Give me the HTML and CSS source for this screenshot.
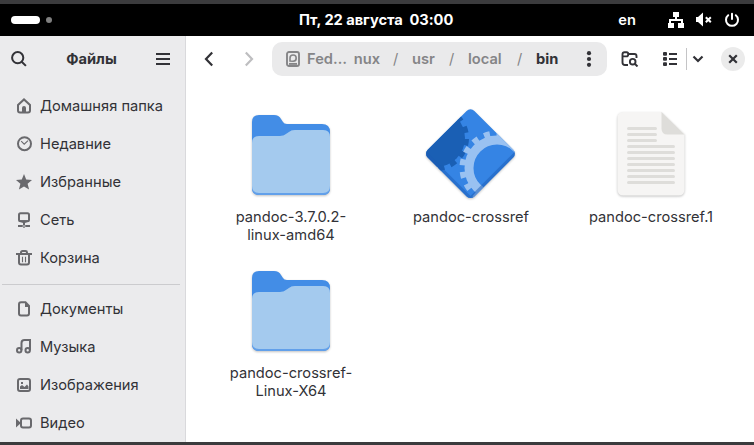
FILE: index.html
```html
<!DOCTYPE html>
<html lang="ru">
<head>
<meta charset="utf-8">
<title>Файлы</title>
<link rel="stylesheet" href="styles.css">
</head>
<body>
<svg width="0" height="0" class="defs">
  <symbol id="folder" viewBox="0 0 90 96">
    <path d="M6 13q0-7 7-7h15q5 0 7 4l2 3q1 2 4 2h35q8 0 8 8v56q0 7-7 7H13q-7 0-7-7z" fill="#438de6"/>
    <path d="M6 34q0-7 7-7h21q4 0 6-2l3-2q2-2 6-2h28q7 0 7 7v51q0 7-7 7H13q-7 0-7-7z" fill="#62a0ea"/>
    <path d="M6 34q0-7 7-7h21q4 0 6-2l3-2q2-2 6-2h28q7 0 7 7v49q0 7-7 7H13q-7 0-7-7z" fill="#a4caee"/>
  </symbol>
</svg>
<header class="topbar">
  <span class="pill"></span><span class="dot"></span>
  <span class="clock">Пт, 22 августа&nbsp; 03:00</span>
  <div class="status">
    <span class="lang">en</span>
    <svg class="net" width="16" height="16" viewBox="0 0 16 16" fill="#fff"><path d="M5 0h6v5H9v2h6v4h1v5h-6v-5h3V9H3v2h3v5H0v-5h1V7h6V5H5z"/></svg>
    <svg class="vol" width="16" height="16" viewBox="0 0 16 16"><path d="M0 5h2l5-4.500v14L2 10H0z" fill="#fff"/><path d="M9.800 5.200l5 5m0-5l-5 5" stroke="#fff" stroke-width="2"/></svg>
    <svg width="16" height="16" viewBox="0 0 16 16" fill="none" stroke="#fff" stroke-width="2" stroke-linecap="round"><path d="M4.200 3.200a6 6 0 1 0 7.600 0M8 1.700v5.200"/></svg>
  </div>
</header>
<div class="window">
  <aside class="sidebar">
    <div class="side-head">
      <svg width="16" height="16" viewBox="0 0 16 16" fill="none" stroke="#323237" stroke-width="2"><circle cx="6.7" cy="6.7" r="5.6"/><path d="M10.7 10.7l4.2 4.2"/></svg>
      <b>Файлы</b>
      <svg width="14" height="14" viewBox="0 0 14 14" fill="#323237"><path d="M0 1h14v2H0zM0 6h14v2H0zM0 11h14v2H0z"/></svg>
    </div>
    <nav>
      <div class="row"><svg class="icon" viewBox="0 0 16 16"><path d="M2 7l6-5.6L14 7v5.6q0 1.9-2 1.900H4q-2 0-2-1.900z"/><path class="solid" d="M6 15V10q0-2 2-2t2 2v5z"/></svg>Домашняя папка</div>
      <div class="row"><svg class="icon" viewBox="0 0 16 16"><circle cx="8.5" cy="7.7" r="6.5"/><path class="thin" d="M5.2 5.2l3 3 3.8-3.5"/></svg>Недавние</div>
      <div class="row"><svg class="icon" viewBox="0 0 16 16"><path class="solid" d="M8 0l2.2 5.4 5.8.5-4.4 3.8 1.5 5.8L8 12.4l-5.1 3.1 1.5-5.8L0 5.9l5.8-.5z"/></svg>Избранные</div>
      <div class="row"><svg class="icon" viewBox="0 0 16 16"><rect x="3" y="1.2" width="10" height="8" rx="1.5"/><path class="solid" d="M3 8.2h10l-3 2.600H9V13H7v-2.200H6zM2 13h4v2H2zM10 13h4v2h-4zM8 11.600l2.300 2.300L8 16.100l-2.300-2.200z"/><circle class="hole" cx="8" cy="14" r=".8"/></svg>Сеть</div>
      <div class="row"><svg class="icon" viewBox="0 0 16 16"><path d="M0 4h16M3 4v8.6q0 2 2 2h6q2 0 2-2V4M5 4V2.5q0-1.4 1.5-1.4h3Q11 1.1 11 2.5V4"/><path class="thin" d="M6.5 6.7v5.5M9.5 6.7v5.5"/></svg>Корзина</div>
      <hr>
      <div class="row"><svg class="icon" viewBox="0 0 16 16"><path d="M5 1.3h4.5L13 5v7.5q0 2-2 2H5q-2 0-2-2V3.3q0-2 2-2z"/><path class="solid" d="M9 1l5 5H9z"/></svg>Документы</div>
      <div class="row"><svg class="icon" viewBox="0 0 16 16"><circle cx="3.2" cy="11.3" r="2.2"/><circle cx="11.7" cy="11.3" r="2.2"/><path d="M5.5 11.3V4q0-3 3-3H14v10.3"/></svg>Музыка</div>
      <div class="row"><svg class="icon" viewBox="0 0 16 16"><rect x="2" y="2" width="12" height="12" rx="2"/><path class="solid" d="M4 12V9.5L6 8l2.5 2L11 7.5l1.5 2V12zM5 5h2v2H5z"/></svg>Изображения</div>
      <div class="row"><svg class="icon" viewBox="0 0 16 16"><rect x="5" y="3.500" width="10" height="9" rx="2"/><path class="solid" d="M0 3.500l4.400 4v1L0 12.500z"/></svg>Видео</div>
    </nav>
  </aside>
  <main>
    <div class="toolbar">
      <svg class="back" width="10" height="16" viewBox="0 0 10 16" fill="none" stroke="#323237" stroke-width="2.2"><path d="M8.2 1.5L2 8l6.2 6.5"/></svg>
      <svg class="fwd" width="10" height="16" viewBox="0 0 10 16" fill="none" stroke="#bebec0" stroke-width="2.2"><path d="M1.8 1.5L8 8l-6.2 6.5"/></svg>
      <div class="path">
        <svg width="14" height="16" viewBox="0 0 14 16" fill="none" stroke="#858587" stroke-width="1.9"><rect x="1" y="1" width="12" height="14" rx="2"/><path d="M4 10V7a3.1 3.1 0 1 1 3.1 3.2z" stroke-width="1.6"/><path d="M3 12.900h8"/></svg>
        <span class="disk">Fed… <span>nux</span></span><i>/</i><span class="usr">usr</span><i>/</i><span class="local">local</span><i>/</i><span class="current">bin</span>
        <svg class="dots" width="6" height="16" viewBox="0 0 6 16" fill="#323237"><circle cx="3" cy="2.2" r="2.1"/><circle cx="3" cy="8" r="2.1"/><circle cx="3" cy="13.8" r="2.1"/></svg>
      </div>
      <svg class="fsearch" width="18" height="16" viewBox="0 0 18 16" fill="none" stroke="#323237" stroke-width="1.9"><path d="M7 14H4q-2.500 0-2.500-2.500V3.200q0-2 2-2h2.200q1.500 0 1.500 1.800h6.300q2 0 2 2v2M2 5.400h3.500q1.700 0 1.700-2.200"/><circle cx="11.7" cy="10.7" r="2.8"/><path d="M13.5 12.5l3 3"/></svg>
      <svg class="list" width="14" height="14" viewBox="0 0 14 14" fill="#323237"><rect width="4" height="3.8" rx="1"/><rect y="5" width="4" height="3.8" rx="1"/><rect y="10.2" width="4" height="3.8" rx="1"/><path d="M6 1h8v2H6zM6 6h8v2H6zM6 11h8v2H6z"/></svg>
      <span class="split"></span>
      <svg class="down" width="12" height="8" viewBox="0 0 12 8" fill="none" stroke="#323237" stroke-width="2.2"><path d="M1.5 1.5L6 6l4.5-4.5"/></svg>
      <span class="close"><svg width="10" height="10" viewBox="0 0 10 10" stroke="#323237" stroke-width="2.2"><path d="M1.2 1.2l7.6 7.6M8.8 1.2L1.2 8.8"/></svg></span>
    </div>
    <div class="files">
      <figure><svg class="art" width="90" height="96"><use href="#folder"/></svg><figcaption>pandoc-3.7.0.2-<br>linux-amd64</figcaption></figure>
      <figure>
        <svg class="art" width="90" height="96" viewBox="0 0 90 96">
          <defs><clipPath id="diamond"><rect x="11.500" y="11.700" width="66" height="66" rx="5.500" transform="rotate(45 44.500 44.700)"/></clipPath></defs>
          <g clip-path="url(#diamond)">
            <path d="M0 0h90v96H0z" fill="#3584e4"/>
            <circle cx="10" cy="29" r="29" fill="#1a5fb4"/>
            <circle cx="10" cy="29" r="30.500" fill="none" stroke="#1a5fb4" stroke-width="5" pathLength="360" stroke-dasharray="12 12" stroke-dashoffset="22"/>
            <circle cx="71" cy="59" r="28" fill="none" stroke="#99c1f1" stroke-width="9"/>
            <circle cx="71" cy="59" r="34.500" fill="none" stroke="#99c1f1" stroke-width="6" pathLength="360" stroke-dasharray="10 11.176" stroke-dashoffset="6"/>
            <path d="M-3 43L44.500 90.500l47.500-47.500" fill="none" stroke="#1c5cb5" stroke-opacity=".5" stroke-width="5"/>
          </g>
        </svg>
        <figcaption>pandoc-crossref</figcaption>
      </figure>
      <figure>
        <svg class="art" width="90" height="96" viewBox="0 0 90 96">
          <path d="M17.500 3H55l23.500 22v55.500q0 6-6 6h-55q-6 0-6-6V9q0-6 6-6z" fill="#f6f5f4"/>
          <path d="M55.500 3l23 22.500H61.500q-6 0-6-6z" fill="#deddda"/>
          <path d="M22.500 19.500h27M22.500 25.500h27M22.500 31.500h27M22.500 37.500h45M22.500 43.500h45M22.500 49.500h45M22.500 55.500h45M22.500 61.500h45M22.500 67.500h45M22.500 73.500h45" stroke="#deddda" stroke-width="3" stroke-linecap="round"/>
        </svg>
        <figcaption>pandoc-crossref.1</figcaption>
      </figure>
      <figure><svg class="art" width="90" height="96"><use href="#folder"/></svg><figcaption>pandoc-crossref-<br>Linux-X64</figcaption></figure>
    </div>
  </main>
</div>
</body>
</html>
```
FILE: styles.css
```css
* { box-sizing: border-box; }
body {
  margin: 0;
  width: 754px;
  height: 445px;
  overflow: hidden;
  border-top: 4px solid #3b3b3d;
  border-bottom: 3px solid #3b3b3d;
  font: 14.67px/18px Inter, "Noto Sans", sans-serif;
  color: #323237;
}
svg { display: block; flex: none; }
.defs { position: absolute; }
.topbar {
  display: grid;
  grid-template-columns: 29px 6px 1fr auto;
  column-gap: 6px;
  align-items: center;
  height: 32px;
  padding: 0 14px 0 11px;
  background: #000;
  color: #fff;
  font-weight: 700;
}
.pill { height: 8px; border-radius: 4px; background: #fff; }
.dot { height: 6px; border-radius: 3px; background: #808080; }
.clock { padding-left: 241px; white-space: nowrap; letter-spacing: -.05px; }
.status { display: flex; align-items: center; }
.lang { font-weight: 600; }
.net { margin-left: 32px; }
.vol { margin: 0 12px; }
.window { display: flex; height: 406px; }
.sidebar { width: 186px; background: #ebebed; border-right: 1px solid #d9d9dc; }
.side-head {
  display: flex;
  align-items: center;
  justify-content: space-between;
  height: 46px;
  padding: 0 15px 0 11px;
}
nav { padding-top: 5px; }
.row { display: flex; align-items: center; gap: 8px; height: 38px; padding-left: 16px; white-space: nowrap; }
hr { height: 1px; margin: 7px 5px 5px 2px; border: 0; background: #cbcbce; }
.icon { width: 16px; height: 16px; fill: none; stroke: #69696d; stroke-width: 2; }
.icon .solid { fill: #69696d; stroke: none; }
.icon .hole { fill: #ebebed; stroke: none; }
.icon .thin { stroke-width: 1.1; }
main { flex: 1; background: #fff; }
.toolbar { display: flex; align-items: center; height: 46px; padding-left: 18px; }
.fwd { margin-left: 30px; }
.path {
  display: flex;
  align-items: center;
  width: 335px;
  height: 34px;
  margin-left: 18px;
  padding-left: 14px;
  border-radius: 10px;
  background: #eaeaeb;
  color: #858587;
  font-weight: 600;
}
.path i { width: 5px; font-style: normal; font-weight: 400; }
.disk { display: flex; justify-content: space-between; width: 73px; margin: 0 13px 0 7px; }
.usr { width: 24px; margin: 0 13px 0 14px; }
.local { width: 36px; margin: 0 13px 0 14px; }
.current { width: 23px; margin-left: 14px; color: #323237; font-weight: 700; }
.dots { margin-left: 27px; }
.fsearch { margin-left: 14px; }
.list { margin-left: 24px; }
.split { width: 1px; height: 22px; margin-left: 9px; background: #c4c4c6; }
.down { margin-left: 5px; }
.close {
  display: grid;
  place-items: center;
  width: 24px;
  height: 24px;
  margin-left: 17px;
  border-radius: 50%;
  background: #ebebeb;
}
.files {
  display: grid;
  grid-template-columns: repeat(3, 180px);
  grid-auto-rows: 156px;
  padding: 27px 0 0 15px;
}
figure { display: flex; flex-direction: column; align-items: center; margin: 0; }
.art { filter: drop-shadow(0 1px 1px rgb(0 0 0 / .24)); }
figcaption { margin-top: 3px; text-align: center; }
```
